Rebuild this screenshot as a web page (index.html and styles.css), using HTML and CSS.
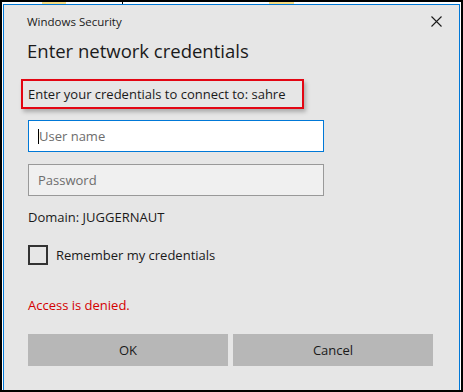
FILE: index.html
```html
<!DOCTYPE html>
<html lang="en">
  <head>
    <meta charset="UTF-8" />
    <meta name="viewport" content="width=device-width, initial-scale=1.0" />
    <title>Windows Security</title>
    <link rel="stylesheet" href="styles.css">
  </head>
  <body>
    <div class="frame">
      <div class="dialog">
        <div class="titlebar">
          <span class="app-name">Windows Security</span>
          <button class="close-btn" aria-label="Close">
            <svg width="11" height="11" viewBox="0 0 11 11">
              <path d="M0.5 0.5 L10.5 10.5 M10.5 0.5 L0.5 10.5" stroke="#1a1a1a" stroke-width="1.1" fill="none" />
            </svg>
          </button>
        </div>

        <h1 class="heading">Enter network credentials</h1>

        <div class="notice">Enter your credentials to connect to: sahre</div>

        <div class="field field-active">
          <span class="caret"></span>
          <span class="placeholder">User name</span>
        </div>
        <div class="field field-disabled">
          <span class="placeholder">Password</span>
        </div>

        <p class="domain">Domain: JUGGERNAUT</p>

        <label class="remember">
          <span class="checkbox"></span>
          <span>Remember my credentials</span>
        </label>

        <p class="error-text">Access is denied.</p>

        <div class="actions">
          <button class="btn">OK</button>
          <button class="btn">Cancel</button>
        </div>
      </div>
    </div>
  </body>
</html>
```

FILE: styles.css
```css
* {
  margin: 0;
  padding: 0;
  box-sizing: border-box;
}

body {
  font-family: "Open Sans", "Noto Sans", sans-serif;
  font-size: 13px;
  color: #1a1a1a;
  width: 463px;
  height: 392px;
  overflow: hidden;
}

/* window frame: black edge, thin white strip, blue accent */
.frame {
  height: 392px;
  border: 2px solid #000;
  padding: 2px 1px 0 1px;
  background: linear-gradient(
    90deg,
    #fff 0,
    #fff 40px,
    #f8dc80 40px,
    #f8dc80 64px,
    #fff 64px,
    #fff 120px,
    #000 120px,
    #000 121px,
    #fff 121px,
    #fff 267px,
    #f8dc80 267px,
    #f8dc80 292px,
    #fff 292px
  );
}

.dialog {
  height: 100%;
  background: #e6e6e6;
  border: 1px solid #0078d7;
  border-bottom: none;
  padding: 0 24px;
  display: flex;
  flex-direction: column;
  align-items: flex-start;
}

.titlebar {
  align-self: stretch;
  display: flex;
  justify-content: space-between;
  align-items: center;
  height: 32px;
  margin-right: -7px;
  margin-left: -1px;
}

.app-name {
  font-size: 11.5px;
}

.close-btn {
  border: none;
  background: none;
  width: 11px;
  height: 11px;
  display: flex;
}

.heading {
  font-size: 18.5px;
  font-weight: 400;
  margin-left: -1px;
  line-height: 28px;
}

.notice {
  margin-top: 14px;
  margin-left: -7px;
  border: 2px solid #e30613;
  padding: 4px 10px 4px 5px;
  line-height: 18px;
  width: 283px;
  box-shadow: 2px 3px 4px rgba(0, 0, 0, 0.25);
  white-space: nowrap;
}

.field {
  width: 296px;
  height: 32px;
  margin-top: 11px;
  border: 1px solid #999;
  background: #f0f0f0;
  display: flex;
  align-items: center;
  padding-left: 9px;
}

.field-active {
  border-color: #0078d7;
  background: #fff;
}

.field-disabled {
  margin-top: 12px;
}

.caret {
  width: 1px;
  height: 15px;
  background: #000;
}

.placeholder {
  color: #6d6d6d;
}

.domain {
  margin-top: 12px;
  line-height: 18px;
}

.remember {
  margin-top: 19px;
  display: flex;
  align-items: center;
  gap: 8px;
}

.checkbox {
  width: 20px;
  height: 20px;
  border: 2px solid #333;
}

.error-text {
  margin-top: 31px;
  color: #d40000;
  line-height: 18px;
}

.actions {
  margin-top: 20px;
  display: flex;
  gap: 5px;
}

.btn {
  width: 200px;
  height: 32px;
  border: none;
  background: #b7b7b7;
  font-family: inherit;
  font-size: 13px;
  color: #1a1a1a;
}
```
